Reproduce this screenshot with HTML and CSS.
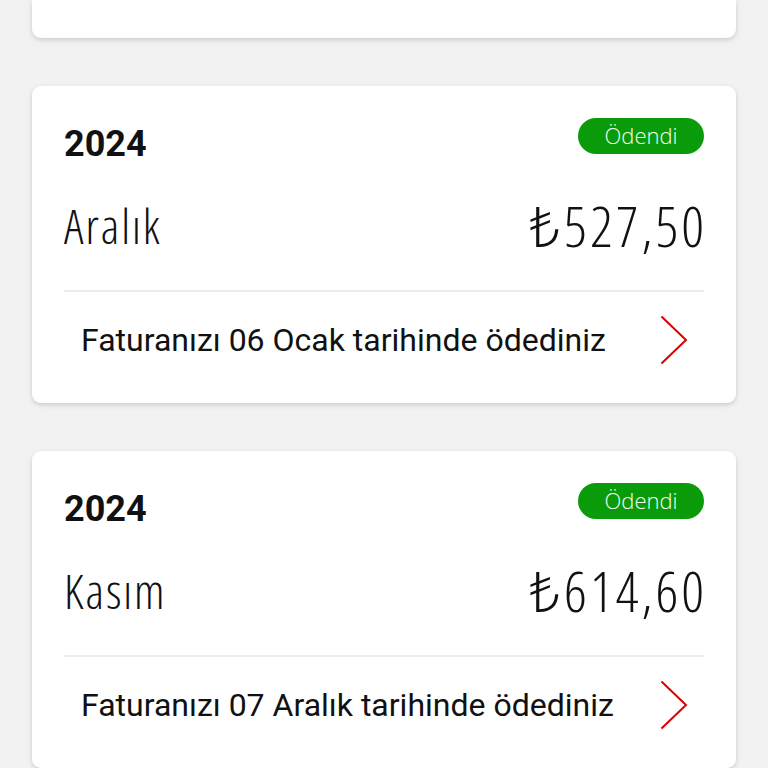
FILE: index.html
```html
<!DOCTYPE html>
<html>
	<head>
		<meta charset="UTF-8">
		<title>Faturalarım</title>
		<link rel="stylesheet" href="styles.css">
	</head>
	<body>
		<!--fatura listesi-->
		<div class="bill-list">
			<!--üstte kalan kartın alt kenarı-->
			<div class="bill-card bill-card-tail"></div>

			<div class="bill-card">
				<div class="bill-head">
					<span class="bill-year">2024</span>
					<span class="badge-paid">Ödendi</span>
				</div>
				<div class="bill-main">
					<span class="bill-month">Aralık</span>
					<span class="bill-amount">₺527,50</span>
				</div>
				<div class="bill-foot">
					<span class="bill-note">Faturanızı 06 Ocak tarihinde ödediniz</span>
					<svg class="chevron" width="28" height="50" viewBox="0 0 28 50"><polyline points="1.5,1.5 26,25 1.5,48.5" fill="none" stroke="#dc0000" stroke-width="2"/></svg>
				</div>
			</div>

			<div class="bill-card">
				<div class="bill-head">
					<span class="bill-year">2024</span>
					<span class="badge-paid">Ödendi</span>
				</div>
				<div class="bill-main">
					<span class="bill-month">Kasım</span>
					<span class="bill-amount">₺614,60</span>
				</div>
				<div class="bill-foot">
					<span class="bill-note">Faturanızı 07 Aralık tarihinde ödediniz</span>
					<svg class="chevron" width="28" height="50" viewBox="0 0 28 50"><polyline points="1.5,1.5 26,25 1.5,48.5" fill="none" stroke="#dc0000" stroke-width="2"/></svg>
				</div>
			</div>
		</div>
	</body>
</html>
```

FILE: styles.css
```css
* {
	padding: 0;
	margin: 0;
	box-sizing: border-box;
}

body {
	background-color: #f2f2f2;
	font-family: Roboto, "Noto Sans", sans-serif;
	color: #111;
	overflow: hidden;
}

.bill-list {
	display: flex;
	flex-direction: column;
	gap: 48px;
	padding: 0 32px;
}

.bill-card {
	flex-shrink: 0;
	height: 317px;
	background-color: #fff;
	border-radius: 9px;
	box-shadow: 0 2px 5px rgba(0, 0, 0, 0.16);
	padding: 32px 32px 0;
}

/* sadece alt kısmı görünen kart */
.bill-card-tail {
	height: 38px;
	border-radius: 0 0 9px 9px;
}

.bill-head {
	display: flex;
	justify-content: space-between;
	align-items: flex-start;
	height: 52px;
}

.bill-year {
	font-size: 36px;
	font-weight: 700;
	line-height: 52px;
}

.badge-paid {
	width: 126px;
	height: 36px;
	border-radius: 18px;
	background-color: #0a9b0a;
	color: #f4fff4;
	font-family: "Open Sans", "Noto Sans", sans-serif;
	font-weight: 300;
	font-size: 22px;
	line-height: 34px;
	text-align: center;
}

.bill-main {
	display: flex;
	justify-content: space-between;
	align-items: center;
	height: 60px;
	margin-top: 25px;
	font-family: "Open Sans", "Noto Sans", sans-serif;
	font-weight: 300;
	font-stretch: 75%;
	padding-bottom: 35px;
	box-sizing: content-box;
	border-bottom: 2px solid #ececec;
}

.bill-month {
	font-size: 48px;
	letter-spacing: 2px;
}

.bill-amount {
	font-size: 56px;
	letter-spacing: 3px;
	margin-right: -3px;
}

.bill-foot {
	display: flex;
	justify-content: space-between;
	align-items: center;
	height: 96px;
	padding: 0 16px 0 17px;
}

.bill-note {
	font-size: 32px;
}

.chevron {
	display: block;
}
```
